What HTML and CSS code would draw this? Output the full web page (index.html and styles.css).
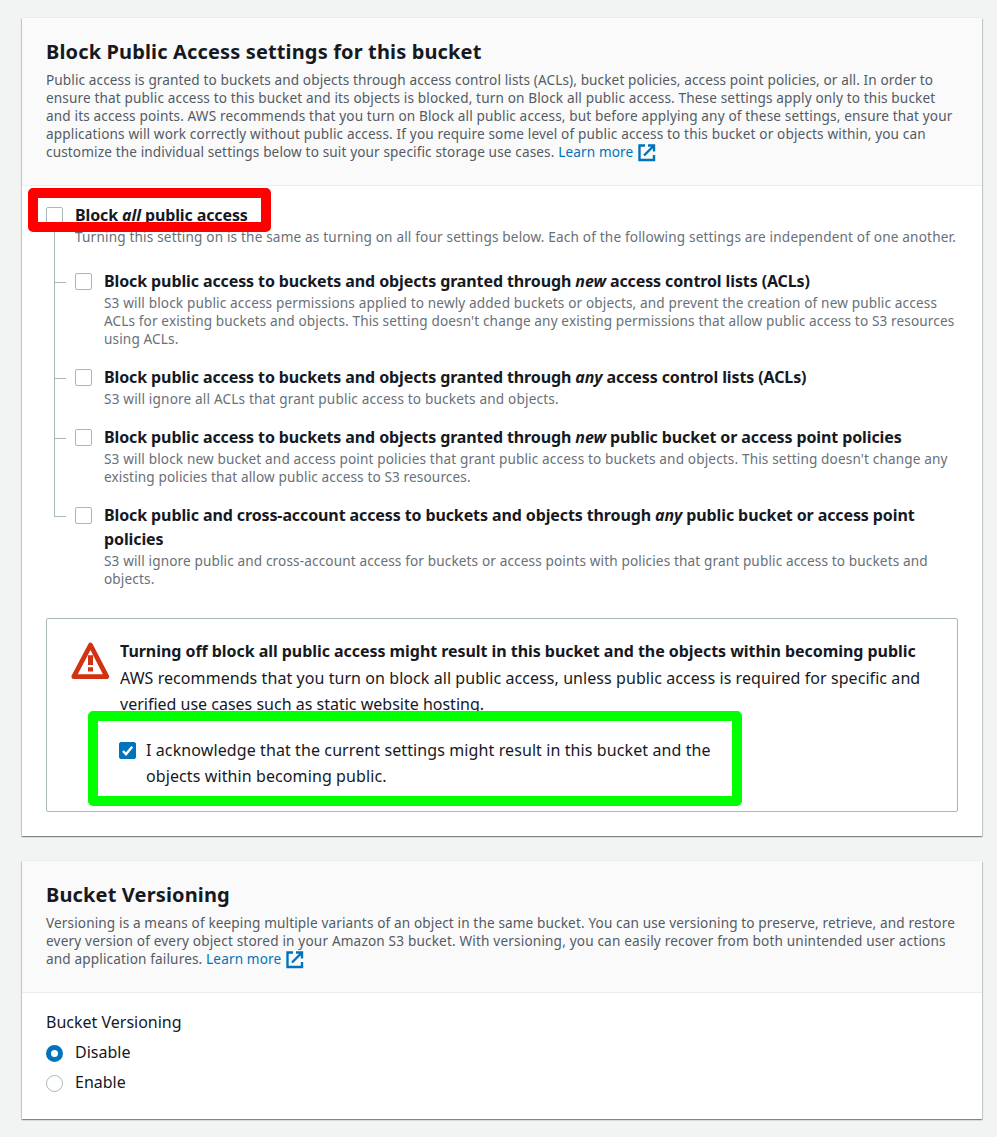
FILE: index.html
```html
<!DOCTYPE html>
<html lang="en">
<head>
<meta charset="utf-8">
<title>Create bucket</title>
<link rel="stylesheet" href="styles.css">
</head>
<body>
<main class="page">
  <section class="card">
    <header class="card-header">
      <h2 class="card-title">Block Public Access settings for this bucket</h2>
      <p class="description">
        <span class="line tight">Public access is granted to buckets and objects through access control lists (ACLs), bucket policies, access point policies, or all. In order to</span>
        <span class="line">ensure that public access to this bucket and its objects is blocked, turn on Block all public access. These settings apply only to this bucket</span>
        <span class="line">and its access points. AWS recommends that you turn on Block all public access, but before applying any of these settings, ensure that your</span>
        <span class="line">applications will work correctly without public access. If you require some level of public access to this bucket or objects within, you can</span>
        <span class="line snug">customize the individual settings below to suit your specific storage use cases. <a class="link">Learn more<svg class="external" viewBox="0 0 18 18"><path d="M7 1.500H1.500v14.500H16v-5M10 1.500h6v6M16 1.500 6 11.500"/></svg></a></span>
      </p>
    </header>
    <div class="card-body">
      <div class="option option-all">
        <span class="checkbox"></span>
        <div class="option-text">
          <h3 class="option-title">Block <em>all</em> public access</h3>
          <p class="hint"><span class="line loose">Turning this setting on is the same as turning on all four settings below. Each of the following settings are independent of one another.</span></p>
        </div>
        <div class="highlight highlight-red"></div>
      </div>
      <div class="tree">
        <div class="option">
          <span class="checkbox"></span>
          <div class="option-text">
            <h3 class="option-title">Block public access to buckets and objects granted through <em>new</em> access control lists (ACLs)</h3>
            <p class="hint">
              <span class="line">S3 will block public access permissions applied to newly added buckets or objects, and prevent the creation of new public access</span>
              <span class="line snug">ACLs for existing buckets and objects. This setting doesn't change any existing permissions that allow public access to S3 resources</span>
              <span class="line">using ACLs.</span>
            </p>
          </div>
        </div>
        <div class="option">
          <span class="checkbox"></span>
          <div class="option-text">
            <h3 class="option-title">Block public access to buckets and objects granted through <em>any</em> access control lists (ACLs)</h3>
            <p class="hint"><span class="line loose">S3 will ignore all ACLs that grant public access to buckets and objects.</span></p>
          </div>
        </div>
        <div class="option">
          <span class="checkbox"></span>
          <div class="option-text">
            <h3 class="option-title">Block public access to buckets and objects granted through <em>new</em> public bucket or access point policies</h3>
            <p class="hint">
              <span class="line">S3 will block new bucket and access point policies that grant public access to buckets and objects. This setting doesn't change any</span>
              <span class="line snug">existing policies that allow public access to S3 resources.</span>
            </p>
          </div>
        </div>
        <div class="option">
          <span class="checkbox"></span>
          <div class="option-text">
            <h3 class="option-title"><span class="line">Block public and cross-account access to buckets and objects through <em>any</em> public bucket or access point</span> <span class="line">policies</span></h3>
            <p class="hint">
              <span class="line snug">S3 will ignore public and cross-account access for buckets or access points with policies that grant public access to buckets and</span>
              <span class="line">objects.</span>
            </p>
          </div>
        </div>
      </div>
      <div class="alert">
        <svg class="warning" viewBox="0 0 40 40"><path class="warning-frame" d="M20.500 5 36.800 36.700H3.800z"/><path class="warning-mark" d="M20.500 15.300V25M20.500 27.300v4.200"/></svg>
        <div class="alert-text">
          <h3 class="alert-title">Turning off block all public access might result in this bucket and the objects within becoming public</h3>
          <p class="alert-copy">
            <span class="line alert-lead">AWS recommends that you turn on block all public access, unless public access is required for specific and</span>
            <span class="line">verified use cases such as static website hosting.</span>
          </p>
          <div class="acknowledge">
            <span class="checkbox checked"><svg viewBox="0 0 17 17"><path d="m4 9 3 3.200L13.200 4.800"/></svg></span>
            <p class="acknowledge-text">
              <span class="line">I acknowledge that the current settings might result in this bucket and the</span>
              <span class="line">objects within becoming public.</span>
            </p>
            <div class="highlight highlight-green"></div>
          </div>
        </div>
      </div>
    </div>
  </section>

  <section class="card">
    <header class="card-header">
      <h2 class="card-title">Bucket Versioning</h2>
      <p class="description">
        <span class="line snug">Versioning is a means of keeping multiple variants of an object in the same bucket. You can use versioning to preserve, retrieve, and restore</span>
        <span class="line loose">every version of every object stored in your Amazon S3 bucket. With versioning, you can easily recover from both unintended user actions</span>
        <span class="line">and application failures. <a class="link">Learn more<svg class="external" viewBox="0 0 18 18"><path d="M7 1.500H1.500v14.500H16v-5M10 1.500h6v6M16 1.500 6 11.500"/></svg></a></span>
      </p>
    </header>
    <div class="versioning">
      <div class="field-label">Bucket Versioning</div>
      <div class="radio-row"><span class="radio selected"></span><span>Disable</span></div>
      <div class="radio-row"><span class="radio"></span><span>Enable</span></div>
    </div>
  </section>
</main>
</body>
</html>
```
FILE: styles.css
```css
* { box-sizing: border-box; }
body {
  margin: 0;
  background: #f2f3f3;
  color: #16191f;
  font: 16px/26px "Noto Sans", "Open Sans", sans-serif;
}
h2, h3, p { margin: 0; }
.page {
  display: flex;
  flex-direction: column;
  gap: 25px;
  padding: 18px 15px 18px 22px;
  height: 1137px;
  overflow: hidden;
}
.card {
  background: #fff;
  box-shadow: 0 1px 1px 0 rgba(0, 28, 36, .3), 1px 1px 1px 0 rgba(0, 28, 36, .15), -1px 1px 1px 0 rgba(0, 28, 36, .15), 0 -1px 0 0 #eaeded;
}
.card-header {
  padding: 21px 24px 23px;
  background: #fafafa;
  border-bottom: 1px solid #eaeded;
}
.card-title {
  margin-bottom: 6px;
  font-size: 20px;
  font-weight: 700;
  line-height: 26px;
  letter-spacing: .14px;
}
.line { display: block; white-space: nowrap; }
.description, .hint { font-size: 13.6px; line-height: 18px; letter-spacing: .14px; }
.tight { letter-spacing: .11px; }
.snug { letter-spacing: .127px; }
.loose { letter-spacing: .168px; }
.description { color: #545b64; }
.hint { margin-top: 1px; color: #687078; }
.link { color: #0073bb; }
.external {
  width: 18px;
  height: 18px;
  margin-left: 5px;
  vertical-align: -5px;
  fill: none;
  stroke: #0073bb;
  stroke-width: 2.400;
}
.card-body { padding: 17px 24px 24px; }
.option { display: flex; gap: 12px; position: relative; }
.option-title {
  font-size: 16px;
  font-weight: 700;
  line-height: 24px;
  letter-spacing: -.108px;
  white-space: nowrap;
}
.checkbox {
  flex: none;
  width: 17px;
  height: 17px;
  margin-top: 4px;
  border: 1px solid #aab7b8;
  border-radius: 2px;
  background: #fff;
}
.tree {
  display: flex;
  flex-direction: column;
  gap: 17px;
  margin: 0 0 30px 8px;
  padding: 23px 0 0 21px;
  position: relative;
}
.tree::before {
  content: "";
  position: absolute;
  left: 0;
  top: -14px;
  bottom: 72px;
  border-left: 1px solid #aab7b8;
}
.tree .option::before {
  content: "";
  position: absolute;
  left: -21px;
  top: 13px;
  width: 12px;
  border-top: 1px solid #aab7b8;
}
.alert {
  display: flex;
  gap: 10px;
  height: 194px;
  padding: 20px 23px;
  border: 1px solid #aab7b8;
  border-radius: 2px;
}
.warning { flex: none; width: 40px; height: 40px; margin-top: 1px; fill: none; stroke: #d13212; overflow: visible; }
.warning-frame { stroke-width: 4.800; stroke-linejoin: round; }
.warning-mark { stroke-width: 5; }
.alert-title { margin-bottom: 2px; font-size: 16px; line-height: 24px; letter-spacing: -.05px; white-space: nowrap; }
.alert-lead { letter-spacing: .067px; }
.acknowledge { display: flex; gap: 10px; margin: 20px 0 0 -1px; position: relative; }
.acknowledge-text { letter-spacing: .1px; }
.checked { margin-top: 5px; border-color: #0073bb; background: #0073bb; }
.checked svg { display: block; width: 17px; height: 17px; margin: -1px; fill: none; stroke: #fff; stroke-width: 2.400; }
.highlight { position: absolute; border: 10px solid; border-radius: 5px; }
.highlight-red { left: -18px; top: -15px; width: 243px; height: 44px; border-color: #f00; }
.highlight-green { left: -31px; top: -26px; width: 654px; height: 95px; border-color: #0f0; }
.versioning { padding: 16px 24px 24px; }
.field-label { margin-bottom: 4px; }
.radio-row { display: flex; gap: 12px; margin-bottom: 4px; }
.radio-row:last-child { margin-bottom: 0; }
.radio {
  flex: none;
  width: 17px;
  height: 17px;
  margin-top: 6px;
  border: 1px solid #aab7b8;
  border-radius: 50%;
}
.selected { border: 5px solid #0073bb; }
```
